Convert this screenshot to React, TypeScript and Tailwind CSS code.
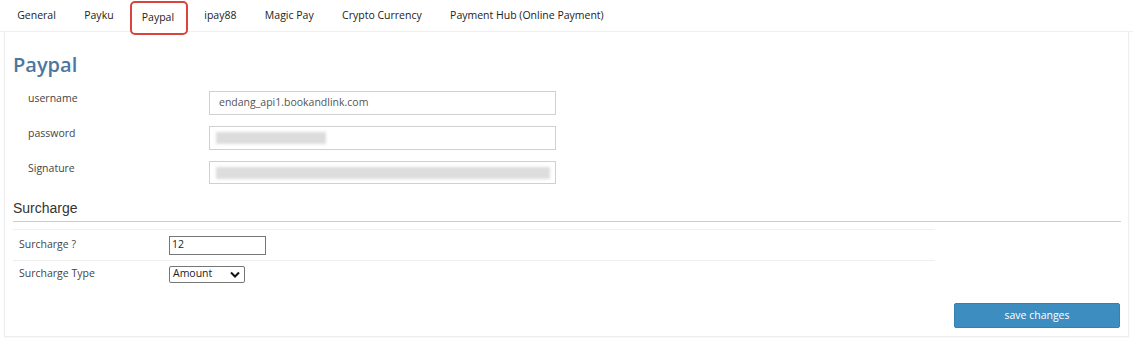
import React from "react";

const tabs = ["General", "Payku", "Paypal", "ipay88", "Magic Pay", "Crypto Currency", "Payment Hub (Online Payment)"];

const font = { fontFamily: '"Open Sans", "Noto Sans", sans-serif' };

function Field({ label, children }: { label: string; children: React.ReactNode }) {
  return (
    <div className="flex items-start h-[35px]">
      <div className="w-[196px] pl-[15px] text-[10.5px] text-[#444]">{label}</div>
      {children}
    </div>
  );
}

export default function App() {
  return (
    <div className="w-[1133px] h-[338px] bg-white text-[#333]" style={font}>
      {/* tabs */}
      <div className="flex h-[32px] border-b border-[#efefef] pl-[3px]">
        {tabs.map((t) => (
          <div
            key={t}
            className={
              t === "Paypal"
                ? "h-[34px] mt-[1px] pl-[10px] pr-[12px] mx-[2px] border-2 border-[#d9443c] rounded-[5px] flex items-center text-[10.5px] text-[#222] relative z-10 bg-white"
                : "h-[32px] px-[14.2px] flex items-center text-[10.5px] text-[#222]"
            }
          >
            {t}
          </div>
        ))}
      </div>

      {/* panel */}
      <div className="mx-[4px] h-[305px] border border-t-0 border-[#eeeeee] shadow-[0_1px_2px_rgba(0,0,0,0.05)] pl-[8px] pr-[8px]">
        <h2 className="pt-[20px] text-[20px] leading-[26px] font-semibold text-[#4b77a0]">Paypal</h2>

        <div className="mt-[13px]">
          <Field label="username">
            <div className="w-[347px] h-[24px] border border-[#d0d0d0] flex items-center pl-[9px] text-[10.5px] text-[#555]">
              endang_api1.bookandlink.com
            </div>
          </Field>
          <Field label="password">
            <div className="w-[347px] h-[24px] border border-[#d0d0d0] flex items-center pl-[6px]">
              <div className="w-[110px] h-[12px] bg-[#dcdcdc] blur-[1.5px]" />
            </div>
          </Field>
          <Field label="Signature">
            <div className="w-[347px] h-[23px] border border-[#d0d0d0] flex items-center pl-[6px]">
              <div className="w-[334px] h-[12px] bg-[#dddddd] blur-[1.5px]" />
            </div>
          </Field>
        </div>

        <div className="mt-[3px]">
          <div
            className="text-[14px] leading-[18px] text-[#333] pb-[4px] border-b border-[#cccccc] w-[1108px]"
            style={{ fontFamily: '"Liberation Sans", Arial, sans-serif' }}
          >
            Surcharge
          </div>
          <div className="w-[922px] mt-[7px] border-t border-[#f0f0f0]">
            <div className="flex items-center h-[31px] border-b border-[#eeeeee]">
              <div className="w-[156px] pl-[6px] text-[10.5px] text-[#444]">Surcharge ?</div>
              <div className="w-[97px] h-[19px] border border-[#767676] flex items-center pl-[2px] text-[10.5px] text-[#222]">
                12
              </div>
            </div>
            <div className="flex items-center h-[26px]">
              <div className="w-[156px] pl-[6px] text-[10.5px] text-[#444]">Surcharge Type</div>
              <div className="w-[76px] h-[17px] border border-[#767676] rounded-[2px] flex items-center justify-between pl-[3px] pr-[4px] text-[10.5px] text-[#222]">
                <span>Amount</span>
                <svg width="10" height="7" viewBox="0 0 10 7">
                  <path d="M1 1.5 L5 5.5 L9 1.5" stroke="#111" strokeWidth="2" fill="none" />
                </svg>
              </div>
            </div>
          </div>
        </div>

        <div className="flex justify-end mt-[16px]">
          <button className="w-[166px] h-[25px] bg-[#3d8dc0] rounded-[2px] border border-[#3580b0] text-white text-[10.5px] font-medium">
            save changes
          </button>
        </div>
      </div>
    </div>
  );
}
